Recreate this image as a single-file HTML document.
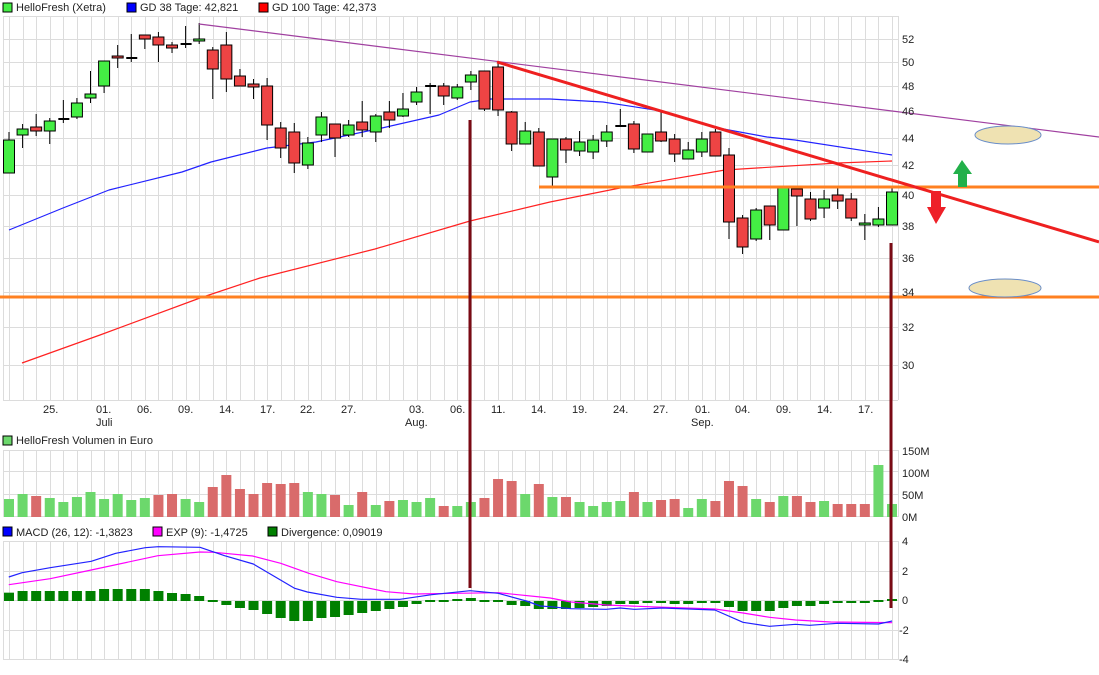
<!DOCTYPE html>
<html><head><meta charset="utf-8"><style>
body{margin:0;background:#fff;width:1099px;height:670px;overflow:hidden;font-family:"Liberation Sans",sans-serif}
svg text{font-family:"Liberation Sans",sans-serif;font-size:11px;fill:#222}
</style></head><body>
<svg id="s" width="1099" height="670" xmlns="http://www.w3.org/2000/svg">
<g id="grid"></g>
<g id="vol"></g>
<g id="macd"></g>
<g id="lines"></g>
<g id="candles"></g>
<g id="over"></g>
<rect x="3" y="3" width="9" height="9" fill="#44ee44" stroke="#000" stroke-width="1"/>
<text x="16" y="11">HelloFresh (Xetra)</text>
<rect x="127" y="3" width="9" height="9" fill="#0000ff" stroke="#000" stroke-width="1"/>
<text x="140" y="11">GD 38 Tage: 42,821</text>
<rect x="259" y="3" width="9" height="9" fill="#ff0000" stroke="#000" stroke-width="1"/>
<text x="272" y="11">GD 100 Tage: 42,373</text>
<text x="902" y="43">52</text><text x="902" y="66">50</text><text x="902" y="90">48</text><text x="902" y="115">46</text>
<text x="902" y="142">44</text><text x="902" y="169">42</text><text x="902" y="199">40</text><text x="902" y="230">38</text>
<text x="902" y="262">36</text><text x="902" y="296">34</text><text x="902" y="331">32</text><text x="902" y="369">30</text>
<text x="43" y="413">25.</text><text x="96" y="413">01.</text><text x="137" y="413">06.</text><text x="178" y="413">09.</text>
<text x="219" y="413">14.</text><text x="260" y="413">17.</text><text x="300" y="413">22.</text><text x="341" y="413">27.</text>
<text x="409" y="413">03.</text><text x="450" y="413">06.</text><text x="491" y="413">11.</text><text x="531" y="413">14.</text>
<text x="572" y="413">19.</text><text x="613" y="413">24.</text><text x="653" y="413">27.</text><text x="695" y="413">01.</text>
<text x="735" y="413">04.</text><text x="776" y="413">09.</text><text x="817" y="413">14.</text><text x="858" y="413">17.</text>
<text x="96" y="426">Juli</text><text x="405" y="426">Aug.</text><text x="691" y="426">Sep.</text>
<rect x="3" y="436" width="9" height="9" fill="#6cd86c" stroke="#000" stroke-width="1"/>
<text x="16" y="444">HelloFresh Volumen in Euro</text>
<text x="902" y="455">150M</text><text x="902" y="477">100M</text><text x="902" y="499">50M</text><text x="902" y="521">0M</text>
<rect x="3" y="527" width="9" height="9" fill="#0000ff" stroke="#000" stroke-width="1"/>
<text x="16" y="536">MACD (26, 12): -1,3823</text>
<rect x="153" y="527" width="9" height="9" fill="#ff00ff" stroke="#000" stroke-width="1"/>
<text x="166" y="536">EXP (9): -1,4725</text>
<rect x="268" y="527" width="9" height="9" fill="#008000" stroke="#000" stroke-width="1"/>
<text x="281" y="536">Divergence: 0,09019</text>
<text x="902" y="545">4</text><text x="902" y="575">2</text><text x="902" y="604">0</text><text x="899" y="634">-2</text><text x="899" y="663">-4</text>
</svg>
<script>
var NS="http://www.w3.org/2000/svg";
function el(g,t,a){var e=document.createElementNS(NS,t);for(var k in a)e.setAttribute(k,a[k]);document.getElementById(g).appendChild(e);return e;}
var N=66,X0=9,DX=(892-9)/65;function cx(i){return X0+i*DX;}
// grid
var gc="#dcdcdc";
[[16,400],[450,517],[541,660]].forEach(function(p){
 for(var i=0;i<N;i++){var x=Math.round(cx(i))+0.5;el("grid","line",{x1:x,y1:p[0],x2:x,y2:p[1],stroke:gc,"stroke-width":1});}
 el("grid","line",{x1:3.5,y1:p[0],x2:3.5,y2:p[1],stroke:gc});
 el("grid","line",{x1:898.5,y1:p[0],x2:898.5,y2:p[1],stroke:gc});
});
[16,39,62,86,111,138,165,195,226,258,292,327,365,400].forEach(function(y){el("grid","line",{x1:3,y1:y+0.5,x2:898,y2:y+0.5,stroke:gc});});
[450,471,494,516].forEach(function(y){el("grid","line",{x1:3,y1:y+0.5,x2:898,y2:y+0.5,stroke:gc});});
[541,571,600,630,659].forEach(function(y){el("grid","line",{x1:3,y1:y+0.5,x2:898,y2:y+0.5,stroke:gc});});
// candles: [top,bottom,wickTop,wickBot,green?]
var C=[[140,173,132,173,1],[129,135,124,148,1],[127,131,114,136,0],[121,131,118,144,1],[119,119,100,123,2],[103,117,98,119,1],[94,98,71,103,1],[61,86,61,93,1],[56,58,45,68,0],[58,58,34,62,2],[35,39,35,49,0],[37,45,32,62,0],[45,48,42,53,0],[44,44,26,48,2],[39,41,23,44,1],[50,69,47,99,0],[45,79,32,92,0],[76,86,69,86,0],[84,87,79,99,0],[86,125,78,140,0],[128,148,122,158,0],[132,163,123,173,0],[143,165,137,169,1],[117,135,112,142,1],[124,138,124,157,0],[125,135,120,137,1],[122,130,101,137,0],[116,132,114,142,1],[112,120,101,128,0],[109,116,93,117,1],[92,102,87,105,1],[86,86,83,114,2],[86,96,83,105,0],[87,98,84,100,1],[75,82,71,90,1],[71,109,71,111,0],[67,110,63,116,0],[112,144,111,151,0],[131,144,122,144,1],[132,166,128,166,0],[139,177,139,186,1],[139,150,137,163,0],[142,151,131,156,1],[140,152,135,159,1],[132,141,125,147,1],[126,126,109,126,2],[124,149,121,153,0],[134,152,134,152,1],[132,141,110,142,0],[139,154,134,162,0],[150,159,142,159,1],[139,152,132,157,1],[132,156,129,156,0],[155,222,148,239,0],[218,247,215,254,0],[210,239,208,241,1],[206,225,206,240,0],[187,230,187,230,1],[189,196,189,226,0],[199,219,192,221,0],[199,208,190,218,1],[195,201,188,209,0],[199,218,193,221,0],[223,225,214,240,1],[219,225,207,227,1],[192,225,188,225,1]];
C.forEach(function(c,i){var x=cx(i);
 el("candles","line",{x1:x,y1:c[2],x2:x,y2:c[3],stroke:"#000","stroke-width":1});
 if(c[4]==2){el("candles","rect",{x:x-5,y:c[0]-1,width:11,height:2,fill:"#000"});}
 else{var h=Math.max(c[1]-c[0],2);el("candles","rect",{x:x-5.5,y:c[0],width:11,height:h,fill:c[4]?"#44ee44":"#ee4444",stroke:"#000","stroke-width":1});}
});
// volume tops (zoom px)
var V=[[327,1],[312,1],[318,0],[324,1],[336,1],[321,1],[306,1],[327,1],[312,1],[330,1],[324,1],[315,0],[312,0],[327,1],[336,1],[291,0],[255,0],[297,0],[312,0],[279,0],[282,0],[279,0],[306,1],[312,1],[315,0],[345,1],[306,0],[345,1],[333,0],[330,1],[336,1],[324,1],[348,0],[348,1],[336,1],[324,0],[267,0],[273,0],[312,1],[282,0],[321,1],[321,0],[336,1],[348,1],[336,1],[333,1],[306,0],[336,1],[330,0],[327,0],[354,1],[327,1],[333,0],[273,0],[288,0],[327,1],[336,0],[318,1],[318,0],[336,0],[333,1],[342,0],[342,0],[342,0],[225,1],[342,1]];
V.forEach(function(v,i){var t=v[0]/3+390;el("vol","rect",{x:cx(i)-5,y:t,width:10,height:517-t,fill:v[1]?"#6cd86c":"#d96b6b"});});
// macd hist
var H=[608,603,603,603,603,603,603,597,597,597,597,603,609,612,618,630,645,654,660,672,684,693,693,684,681,675,669,663,657,651,642,636,636,627,624,636,636,645,648,657,657,657,654,651,648,642,642,639,639,642,642,639,639,651,663,663,663,654,648,648,642,639,639,639,636,627];
var Z=633;
H.forEach(function(h,i){var y1=Math.min(h,Z)/3+390,y2=Math.max(h,Z)/3+390;if(y2-y1<2){y1=Z/3+389;y2=Z/3+391;}
 el("macd","rect",{x:cx(i)-5,y:y1,width:10,height:y2-y1,fill:"#008000"});});
function pl(g,pts,col,w){el(g,"polyline",{points:pts.map(function(p){return p.join(",")}).join(" "),fill:"none",stroke:col,"stroke-width":w,"stroke-linejoin":"round"});}
function z3(a,off){return a.map(function(p){return [p[0]/2.85+off,p[1]/3+390];});}
pl("macd",z3([[25,584],[143,566],[260,540],[450,497],[570,486],[610,487],[720,498],[800,520],[880,550],[960,575],[1100,605],[1180,612],[1300,610],[1420,608],[1568,624]],0).concat(z3([[60,636],[160,645],[300,651],[470,657],[550,669],[626,682],[700,690],[800,696],[975,698]],550)),"#ff00ff",1.2);
pl("macd",z3([[25,561],[63,548],[143,533],[260,514],[330,490],[414,473],[451,470],[570,472],[640,497],[722,522],[840,595],[876,606],[960,622],[1030,628],[1140,628],[1230,614],[1340,602],[1420,610],[1500,633],[1540,648],[1568,650]],0).concat(z3([[60,656],[160,658],[200,654],[240,658],[320,654],[470,660],[550,697],[626,709],[700,703],[740,706],[820,700],[936,702],[975,693]],550)),"#2222ff",1.2);
// MAs
pl("lines",[[9,230],[63,208],[109,190],[182,172],[211,162],[267,148],[316,142],[382,128],[439,115],[470,102],[491,99],[550,99],[603,102],[655,110],[718,128],[767,137],[795,140],[892,155]],"#2222ff",1.2);
pl("lines",[[22,363],[100,335],[200,298],[260,278],[375,249],[470,221],[550,202],[620,188],[725,170],[838,163],[892,161]],"#ff2222",1.2);
el("over","line",{x1:199,y1:24,x2:1099,y2:137,stroke:"#a040a0","stroke-width":1.2});
el("over","line",{x1:0,y1:297,x2:1099,y2:297,stroke:"#ff8020","stroke-width":3});
el("over","line",{x1:539,y1:187,x2:1099,y2:187,stroke:"#ff8020","stroke-width":3});
el("over","line",{x1:497,y1:62,x2:1099,y2:242,stroke:"#ee2020","stroke-width":3});
el("over","line",{x1:470,y1:120,x2:470,y2:588,stroke:"#7a0a14","stroke-width":3});
el("over","line",{x1:891,y1:243,x2:891,y2:608,stroke:"#7a0a14","stroke-width":3});
el("over","polygon",{points:"962,160 972,174 967,174 967,187 958,187 958,174 953,174",fill:"#22b04a"});
el("over","polygon",{points:"931,191 941,191 941,207 946,207 936,224 927,207 931,207",fill:"#ee2028"});
el("over","ellipse",{cx:1008,cy:135,rx:33,ry:9,fill:"#efe2b2",stroke:"#6a8ec8","stroke-width":1});
el("over","ellipse",{cx:1005,cy:288,rx:36,ry:9,fill:"#efe2b2",stroke:"#6a8ec8","stroke-width":1});
</script>
</body></html>
